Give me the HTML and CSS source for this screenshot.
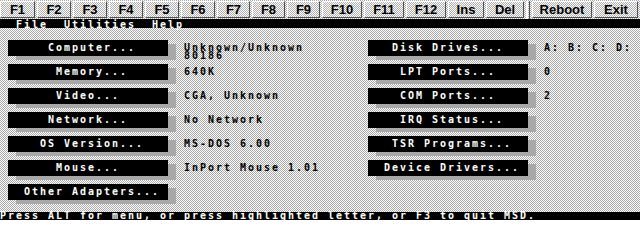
FILE: index.html
```html
<!DOCTYPE html>
<html lang="en">
<head>
    <meta charset="UTF-8">
    <title>Microsoft Diagnostics</title>
    <link rel="stylesheet" href="styles.css">
</head>
<body>
    <div class="screen">
        <div class="fkeys">
            <button class="fkey">F1</button>
            <button class="fkey">F2</button>
            <button class="fkey">F3</button>
            <button class="fkey">F4</button>
            <button class="fkey">F5</button>
            <button class="fkey">F6</button>
            <button class="fkey">F7</button>
            <button class="fkey">F8</button>
            <button class="fkey">F9</button>
            <button class="fkey">F10</button>
            <button class="fkey">F11</button>
            <button class="fkey">F12</button>
            <button class="fkey">Ins</button>
            <button class="fkey">Del</button>
            <span class="fkey-sep"></span>
            <button class="fkey">Reboot</button>
            <button class="fkey">Exit</button>
        </div>

        <div class="menubar">  File  Utilities  Help</div>

        <main class="panel">
            <div class="item">     Computer...    </div>
            <div class="value">Unknown/Unknown<br>80186</div>
            <div class="item">   Disk Drives...   </div>
            <div class="value">A: B: C: D:</div>

            <div class="item">      Memory...     </div>
            <div class="value">640K</div>
            <div class="item">    LPT Ports...    </div>
            <div class="value">0</div>

            <div class="item">      Video...      </div>
            <div class="value">CGA, Unknown</div>
            <div class="item">    COM Ports...    </div>
            <div class="value">2</div>

            <div class="item">     Network...     </div>
            <div class="value">No Network</div>
            <div class="item">    IRQ Status...   </div>
            <div class="value"></div>

            <div class="item">    OS Version...   </div>
            <div class="value">MS-DOS 6.00</div>
            <div class="item">   TSR Programs...  </div>
            <div class="value"></div>

            <div class="item">      Mouse...      </div>
            <div class="value">InPort Mouse 1.01</div>
            <div class="item">  Device Drivers... </div>
            <div class="value"></div>

            <div class="item">  Other Adapters... </div>
        </main>

        <div class="status">Press ALT for menu, or press highlighted letter, or F3 to quit MSD.</div>
    </div>
</body>
</html>
```

FILE: styles.css
```css
body {
    margin: 0;
    background-color: #fff;
    font-family: "DejaVu Sans Mono", "Liberation Mono", monospace;
}
.screen {
    width: 640px;
    height: 220px;
    display: flex;
    flex-direction: column;
    /* dithered grey, like the text mode shading */
    background-image: conic-gradient(#fff 25%, #a8a8a8 0 50%, #fff 0 75%, #a8a8a8 0);
    background-size: 2px 2px;
}
.fkeys {
    display: flex;
    flex-shrink: 0;
    gap: 2px;
    height: 19px;
    padding-top: 1px;
    box-sizing: border-box;
}
.fkey {
    width: 34px;
    height: 17px;
    margin: 0;
    padding: 0;
    border: 1px solid;
    border-color: #fff #505050 #505050 #fff;
    background-image: conic-gradient(#fff 25%, #b0b0b0 0 50%, #fff 0 75%, #b0b0b0 0);
    background-size: 2px 2px;
    font-family: "Liberation Sans", Arial, sans-serif;
    font-size: 13px;
    font-weight: bold;
    line-height: 15px;
    color: #000;
}
.fkey:first-child {
    width: 35px;
}
.fkey:nth-child(n+7) {
    width: 33px;
}
.fkey:nth-child(n+10) {
    width: 40px;
}
.fkey:nth-child(13) {
    width: 36px;
}
.fkey:nth-child(14) {
    width: 38px;
}
.fkey:nth-child(16) {
    width: 60px;
}
.fkey:nth-child(17) {
    width: 44px;
}
.fkey-sep {
    width: 4px;
    height: 18px;
    border-left: 2px solid #fff;
    border-right: 1px solid #505050;
    box-sizing: border-box;
}
.menubar,
.status {
    flex-shrink: 0;
    background-color: #000;
    color: #fff;
    white-space: pre;
    font-size: 10px;
    font-weight: bold;
    letter-spacing: 1.98px;
}
.menubar {
    height: 9px;
    line-height: 11px;
}
.panel {
    flex: 1;
    display: grid;
    grid-template-columns: 160px 200px 160px 1fr;
    grid-auto-rows: 16px;
    row-gap: 8px;
    padding: 12px 0 0 8px;
    font-size: 10px;
    font-weight: bold;
    letter-spacing: 1.98px;
}
.item {
    background-color: #000;
    color: #fff;
    white-space: pre;
    line-height: 16px;
    box-shadow: 8px 4px 0 #a8a8a8;
}
.value {
    padding: 4px 0 0 16px;
    line-height: 8px;
    color: #000;
    white-space: pre;
}
.status {
    height: 8px;
    line-height: 8px;
}
```
